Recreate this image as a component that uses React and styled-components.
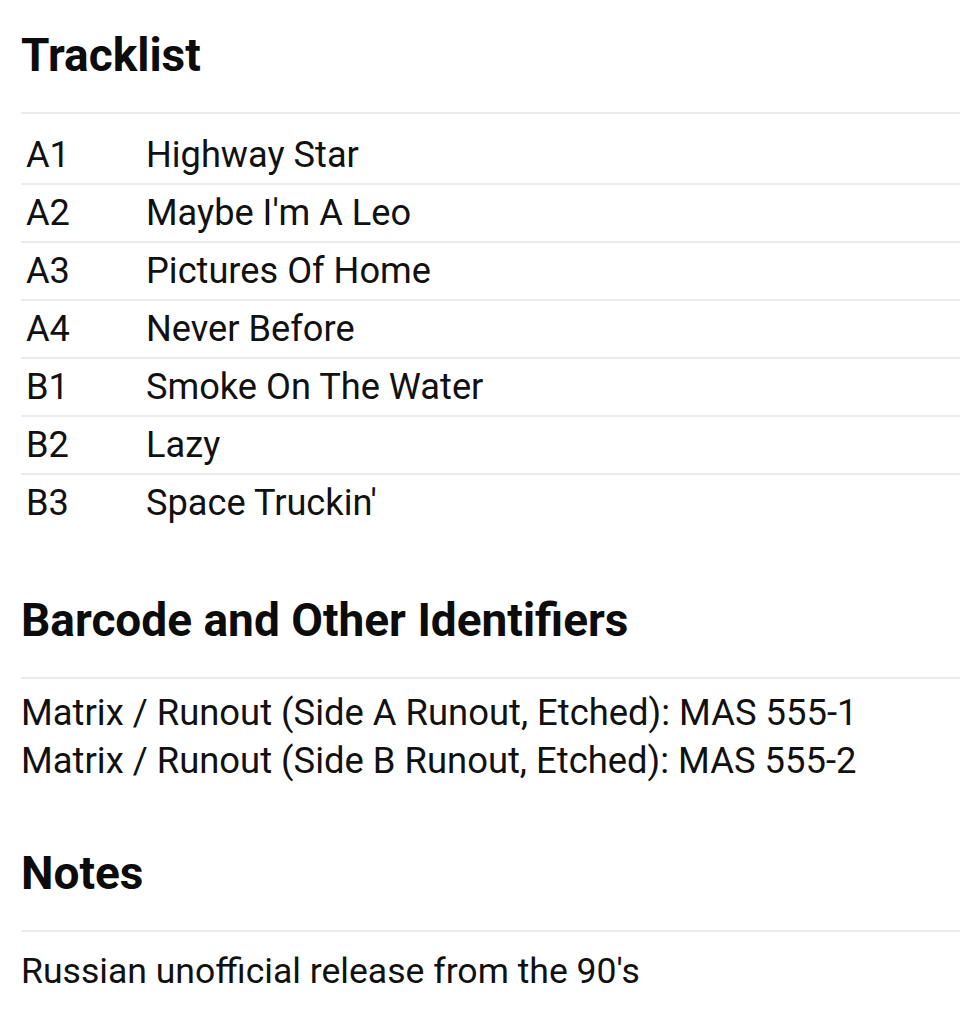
import React from "react";
import styled, { createGlobalStyle } from "styled-components";

const Global = createGlobalStyle`
  html, body { margin: 0; padding: 0; background: #ffffff; }
  body { font-family: Roboto, "Noto Sans", "Liberation Sans", sans-serif; color: #111111; }
`;

const Page = styled.main`
  padding: 0 20px 0 21px;
  width: 939px;
`;

const Section = styled.section`
  margin-top: ${(p) => p.$gap}px;
`;

const Heading = styled.h2`
  margin: 0;
  font-size: 46px;
  line-height: 54px;
  font-weight: 700;
  color: #0c0c0c;
  padding-bottom: 30px;
  border-bottom: 2px solid #ebebeb;
`;

const Tracks = styled.div`
  margin-top: 13px;
  display: grid;
  grid-template-columns: 125px 1fr;
`;

const TrackRow = styled.div`
  display: contents;
`;

const Cell = styled.div`
  font-size: 36.2px;
  line-height: 56px;
  padding-left: ${(p) => (p.$code ? "5px" : "0")};
  border-top: ${(p) => (p.$first ? "none" : "2px solid #ebebeb")};
  white-space: nowrap;
`;

const IdList = styled.ul`
  list-style: none;
  margin: 10px 0 0;
  padding: 0;
`;

const IdItem = styled.li`
  font-size: 36.4px;
  line-height: 48px;
  white-space: nowrap;
`;

const Note = styled.p`
  margin: 11px 0 0;
  font-size: 35.6px;
  line-height: 56px;
`;

const tracks = [
  ["A1", "Highway Star"],
  ["A2", "Maybe I'm A Leo"],
  ["A3", "Pictures Of Home"],
  ["A4", "Never Before"],
  ["B1", "Smoke On The Water"],
  ["B2", "Lazy"],
  ["B3", "Space Truckin'"],
];

const ids = [
  "Matrix / Runout (Side A Runout, Etched): MAS 555-1",
  "Matrix / Runout (Side B Runout, Etched): MAS 555-2",
];

export default function App() {
  return (
    <>
      <Global />
      <Page>
        <Section $gap={28}>
          <Heading>Tracklist</Heading>
          <Tracks>
            {tracks.map(([pos, title], i) => (
              <TrackRow key={pos}>
                <Cell $code $first={i === 0}>{pos}</Cell>
                <Cell $first={i === 0}>{title}</Cell>
              </TrackRow>
            ))}
          </Tracks>
        </Section>
        <Section $gap={62}>
          <Heading>Barcode and Other Identifiers</Heading>
          <IdList>
            {ids.map((t) => (
              <IdItem key={t}>{t}</IdItem>
            ))}
          </IdList>
        </Section>
        <Section $gap={61}>
          <Heading>Notes</Heading>
          <Note>Russian unofficial release from the 90's</Note>
        </Section>
      </Page>
    </>
  );
}
